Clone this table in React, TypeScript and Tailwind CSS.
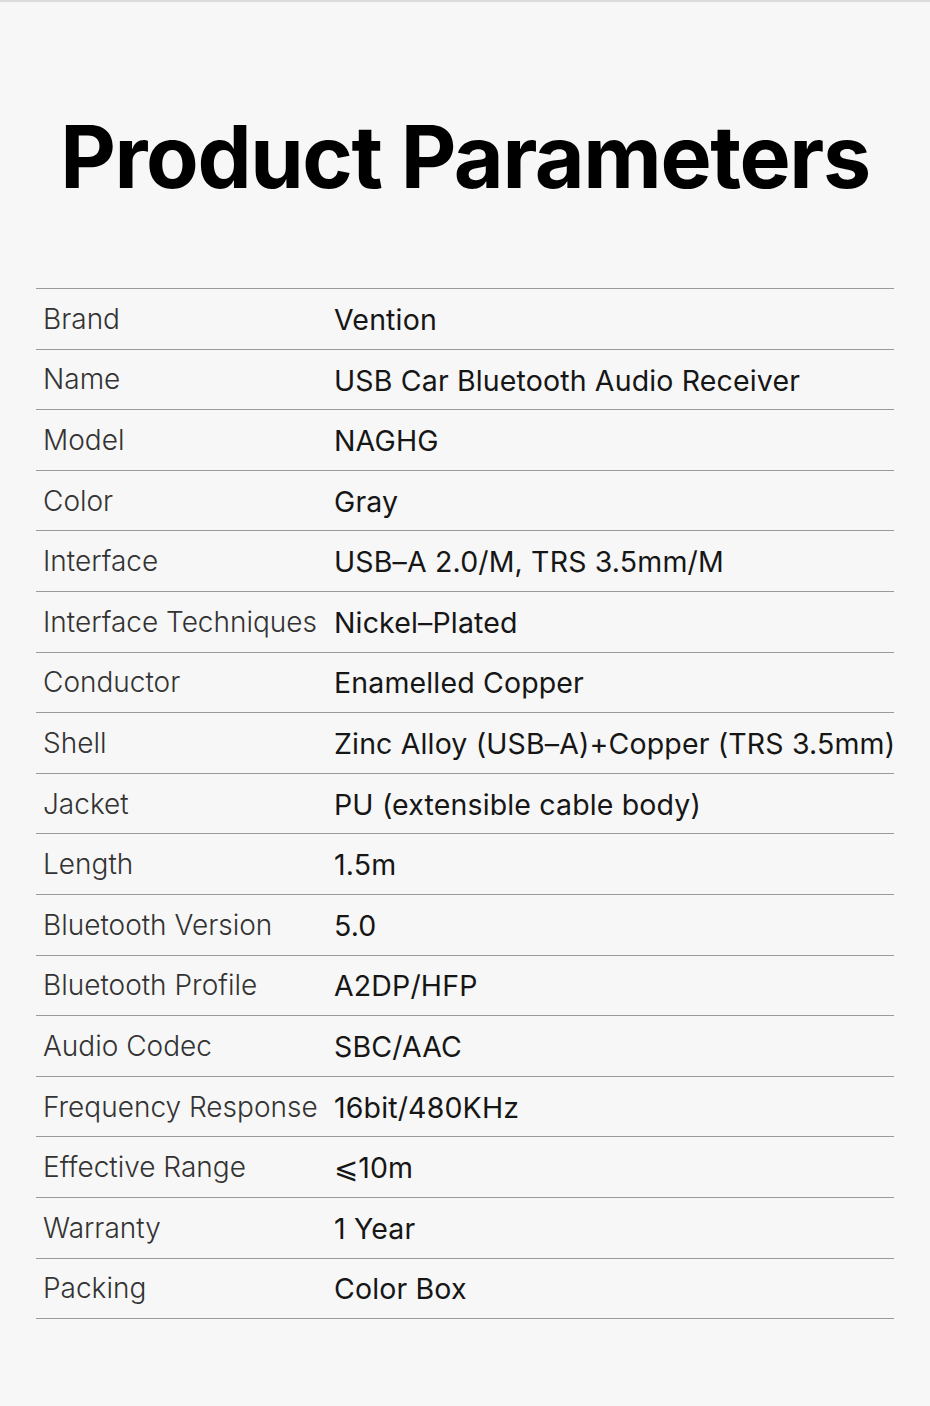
const rows: [string, string][] = [
  ["Brand", "Vention"],
  ["Name", "USB Car Bluetooth Audio Receiver"],
  ["Model", "NAGHG"],
  ["Color", "Gray"],
  ["Interface", "USB–A 2.0/M, TRS 3.5mm/M"],
  ["Interface Techniques", "Nickel–Plated"],
  ["Conductor", "Enamelled Copper"],
  ["Shell", "Zinc Alloy (USB–A)+Copper (TRS 3.5mm)"],
  ["Jacket", "PU (extensible cable body)"],
  ["Length", "1.5m"],
  ["Bluetooth Version", "5.0"],
  ["Bluetooth Profile", "A2DP/HFP"],
  ["Audio Codec", "SBC/AAC"],
  ["Frequency Response", "16bit/480KHz"],
  ["Effective Range", "⩽10m"],
  ["Warranty", "1 Year"],
  ["Packing", "Color Box"],
];

export default function App() {
  return (
    <div className="w-[930px] h-[1406px] bg-[#f7f7f7] border-t-2 border-[#dcdcdc] font-['Inter',sans-serif] overflow-hidden">
      <h1 className="pt-[100px] h-[286px] text-center text-[86px] leading-[110px] font-bold text-black tracking-[-1.4px]">
        Product Parameters
      </h1>
      <div className="mx-[36px] border-t-[1.5px] border-[#9a9a9a]">
        {rows.map(([label, value]) => (
          <div
            key={label}
            className="flex items-center h-[60.6px] border-b-[1.5px] border-[#9a9a9a]"
          >
            <div className="w-[298px] shrink-0 pl-[7px] text-[28px] font-light text-[#333] whitespace-nowrap">
              {label}
            </div>
            <div className="pt-[3px] text-[28.5px] font-normal text-[#161616] whitespace-nowrap tracking-[0.15px]">
              {value}
            </div>
          </div>
        ))}
      </div>
    </div>
  );
}
